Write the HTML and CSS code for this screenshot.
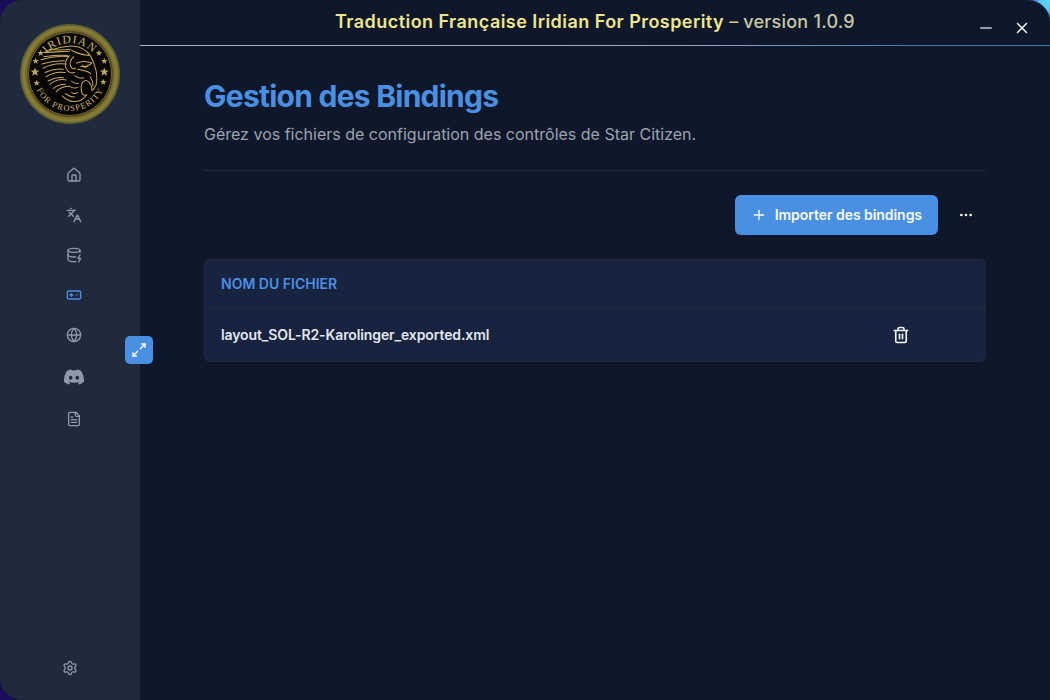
FILE: index.html
```html
<!DOCTYPE html>
<html lang="fr">
<head>
<meta charset="utf-8">
<title>Traduction Française Iridian For Prosperity</title>
<link rel="stylesheet" href="styles.css">
</head>
<body>
<div class="app">
  <aside class="sidebar">
    <div class="logo">
      <svg class="logo-svg" viewBox="0 0 100 100" width="100" height="100" aria-hidden="true">
        <defs>
          <radialGradient id="rim" cx="50%" cy="50%" r="50%">
            <stop offset="83%" stop-color="#2e2a10"/>
            <stop offset="87%" stop-color="#77692a"/>
            <stop offset="93%" stop-color="#8a8238"/>
            <stop offset="100%" stop-color="#555532"/>
          </radialGradient>
          <path id="arcTop" d="M19 50a31 31 0 0 1 62 0"/>
          <path id="arcBot" d="M13 50a37 37 0 0 0 74 0"/>
          <path id="star" d="M0-3.200.9-1 3.200-1 1.400.4 2 2.700 0 1.400-2 2.700-1.400.4-3.200-1-.9-1z"/>
        </defs>
        <circle cx="50" cy="50" r="50" fill="url(#rim)"/>
        <circle cx="50" cy="50" r="41.500" fill="#070603" stroke="#8a7a3c" stroke-width=".8"/>
        <text class="logo-text-top"><textPath href="#arcTop" startOffset="50%" text-anchor="middle">IRIDIAN</textPath></text>
        <text class="logo-text-bot"><textPath href="#arcBot" startOffset="50%" text-anchor="middle">FOR PROSPERITY</textPath></text>
        <g fill="#b8a45e">
          <use href="#star" x="20.700" y="29"/>
          <use href="#star" x="15.700" y="37"/>
          <use href="#star" transform="translate(15 48) scale(1.400)"/>
          <use href="#star" x="16.700" y="59"/>
          <use href="#star" x="79" y="29"/>
          <use href="#star" x="84.300" y="37"/>
          <use href="#star" transform="translate(84.300 48) scale(1.400)"/>
          <use href="#star" x="83.300" y="58"/>
        </g>
        <g fill="none" stroke="#c8a958" stroke-width=".95" stroke-linecap="round" stroke-linejoin="round" transform="matrix(1.020 0 0 1.060 -1.500 -6.600)">
          <path d="M25 33c9-3 18-6 27-6 9 0 15 4 19 10 3 5 4 9 5 13 1 5 1 10 0 14-1 2-2 4-4 5 0-3-1-6-3-8-2-2-4-2-6 0-2 3-2 6-1 10 1 2 3 3 5 2-3 4-6 6-10 6-5 1-10-1-14-5"/>
          <path d="M25 33c8 0 16-1 25-1M30 30c7 1 14 1 21 0M22 40c9-3 18-4 27-3M25 37c8-1 15-2 23-1M24 48c7-4 15-5 23-4M23 44c8-2 15-3 22-3M27 56c6-4 12-5 19-4M26 52c6-3 12-4 18-3M31 63c5-4 10-5 16-4M29 60c5-3 10-4 15-3M37 70c4-4 8-5 13-5M34 67c4-3 8-4 12-4"/>
          <path d="M52 31c5 3 10 4 17 5M50 36c-4 4-5 9-3 13 2 3 5 4 8 3M54 37c-3 3-4 6-3 9 1 2 3 3 5 2"/>
          <path d="M57 43c5-2 10-2 15 0-3 3-7 4-11 3M63 45a2.500 2 0 0 0 5 0"/>
          <path d="M58 49c4 1 9 1 13 4M55 55c3 2 6 3 9 2M52 60c2 2 4 3 7 2M50 65c3 2 5 2 8 1M52 71c2 1 4 1 6 0M46 72c3 2 6 3 9 3"/>
          <path d="M70 56c2 2 3 5 3 9"/>
        </g>
      </svg>
    </div>
    <nav class="nav">
      <a class="nav-item"><svg class="ic" viewBox="0 0 24 24"><path d="M15 21v-8a1 1 0 0 0-1-1h-4a1 1 0 0 0-1 1v8"/><path d="M3 10a2 2 0 0 1 .709-1.528l7-5.999a2 2 0 0 1 2.582 0l7 5.999A2 2 0 0 1 21 10v9a2 2 0 0 1-2 2H5a2 2 0 0 1-2-2z"/></svg></a>
      <a class="nav-item"><svg class="ic" viewBox="0 0 24 24"><path d="m5 8 6 6"/><path d="m4 14 6-6 2-3"/><path d="M2 5h12"/><path d="M7 2h1"/><path d="m22 22-5-10-5 10"/><path d="M14 18h6"/></svg></a>
      <a class="nav-item"><svg class="ic" viewBox="0 0 24 24"><ellipse cx="12" cy="5" rx="9" ry="3"/><path d="M3 5V19A9 3 0 0 0 15 21.840"/><path d="M21 5V8"/><path d="M21 12L18 17H22L19 22"/><path d="M3 12A9 3 0 0 0 14.590 14.870"/></svg></a>
      <a class="nav-item nav-active"><svg class="ic" viewBox="0 0 24 24"><rect x="2" y="6" width="20" height="12" rx="2"/><path d="M6 12h4"/><path d="M8 10v4"/><path d="M15 13h.01"/><path d="M18 11h.01"/></svg></a>
      <a class="nav-item"><svg class="ic" viewBox="0 0 24 24"><circle cx="12" cy="12" r="10"/><path d="M12 2a14.500 14.500 0 0 0 0 20 14.500 14.500 0 0 0 0-20"/><path d="M2 12h20"/></svg></a>
      <a class="nav-item nav-discord"><svg class="ic-discord" viewBox="0 0 24 24"><path d="M20.317 4.370a19.791 19.791 0 0 0-4.885-1.515.074.074 0 0 0-.079.037c-.21.375-.444.864-.608 1.250a18.270 18.270 0 0 0-5.487 0 12.640 12.640 0 0 0-.617-1.250.077.077 0 0 0-.079-.037A19.736 19.736 0 0 0 3.677 4.370a.070.070 0 0 0-.032.027C.533 9.046-.32 13.580.099 18.057a.082.082 0 0 0 .031.057 19.900 19.900 0 0 0 5.993 3.030.078.078 0 0 0 .084-.028c.462-.630.874-1.295 1.226-1.994a.076.076 0 0 0-.041-.106 13.107 13.107 0 0 1-1.872-.892.077.077 0 0 1-.008-.128 10.200 10.200 0 0 0 .372-.292.074.074 0 0 1 .077-.010c3.928 1.793 8.180 1.793 12.062 0a.074.074 0 0 1 .078.010c.120.098.246.198.373.292a.077.077 0 0 1-.006.127 12.299 12.299 0 0 1-1.873.892.077.077 0 0 0-.041.107c.360.698.772 1.362 1.225 1.993a.076.076 0 0 0 .084.028 19.839 19.839 0 0 0 6.002-3.030.077.077 0 0 0 .032-.054c.500-5.177-.838-9.674-3.549-13.660a.061.061 0 0 0-.031-.030zM8.020 15.330c-1.183 0-2.157-1.085-2.157-2.419 0-1.333.956-2.419 2.157-2.419 1.210 0 2.176 1.096 2.157 2.420 0 1.333-.956 2.418-2.157 2.418zm7.975 0c-1.183 0-2.157-1.085-2.157-2.419 0-1.333.955-2.419 2.157-2.419 1.210 0 2.176 1.096 2.157 2.420 0 1.333-.946 2.418-2.157 2.418z"/></svg></a>
      <a class="nav-item"><svg class="ic" viewBox="0 0 24 24"><path d="M15 2H6a2 2 0 0 0-2 2v16a2 2 0 0 0 2 2h12a2 2 0 0 0 2-2V7Z"/><path d="M14 2v4a2 2 0 0 0 2 2h4"/><path d="M10 9H8"/><path d="M16 13H8"/><path d="M16 17H8"/></svg></a>
    </nav>
    <a class="settings"><svg class="ic" viewBox="0 0 24 24"><path d="M9.671 4.136a2.340 2.340 0 0 1 4.659 0 2.340 2.340 0 0 0 3.319 1.915 2.340 2.340 0 0 1 2.330 4.033 2.340 2.340 0 0 0 0 3.831 2.340 2.340 0 0 1-2.330 4.033 2.340 2.340 0 0 0-3.319 1.915 2.340 2.340 0 0 1-4.659 0 2.340 2.340 0 0 0-3.320-1.915 2.340 2.340 0 0 1-2.330-4.033 2.340 2.340 0 0 0 0-3.831A2.340 2.340 0 0 1 6.350 6.051a2.340 2.340 0 0 0 3.320-1.915"/><circle cx="12" cy="12" r="3"/></svg></a>
    <button class="expand"><svg class="ic-expand" viewBox="0 0 24 24"><path d="m21 3-7 7"/><path d="m3 21 7-7"/><path d="M16 3h5v5"/><path d="M3 16v5h5"/></svg></button>
  </aside>
  <div class="main">
    <header class="titlebar">
      <div class="title"><span class="title-name">Traduction Française Iridian For Prosperity</span><span class="title-dash"> – </span><span class="title-version">version 1.0.9</span></div>
      <div class="win-controls">
        <svg class="win-ic win-min" viewBox="0 0 24 24"><path d="M5 12h14"/></svg>
        <svg class="win-ic" viewBox="0 0 24 24"><path d="M18 6 6 18"/><path d="m6 6 12 12"/></svg>
      </div>
    </header>
    <main class="content">
      <h1 class="heading">Gestion des Bindings</h1>
      <p class="sub">Gérez vos fichiers de configuration des contrôles de Star Citizen.</p>
      <div class="sep"></div>
      <div class="actions">
        <button class="btn-primary"><svg class="ic-plus" viewBox="0 0 24 24"><path d="M5 12h14"/><path d="M12 5v14"/></svg>Importer des bindings</button>
        <button class="btn-more"><svg class="ic-more" viewBox="0 0 24 24"><circle cx="5" cy="12" r="2"/><circle cx="12" cy="12" r="2"/><circle cx="19" cy="12" r="2"/></svg></button>
      </div>
      <section class="table">
        <div class="thead">NOM DU FICHIER</div>
        <div class="row">
          <span class="fname">layout_SOL-R2-Karolinger_exported.xml</span>
          <span class="row-action"><svg class="ic-trash" viewBox="0 0 24 24"><path d="M3 6h18"/><path d="M19 6v14a2 2 0 0 1-2 2H7a2 2 0 0 1-2-2V6"/><path d="M8 6V4a2 2 0 0 1 2-2h4a2 2 0 0 1 2 2v2"/><path d="M10 11v6"/><path d="M14 11v6"/></svg></span>
        </div>
      </section>
    </main>
  </div>
</div>
</body>
</html>
```

FILE: styles.css
```css
* { box-sizing: border-box; }
html, body { margin: 0; height: 100%; }
body {
  width: 1050px;
  height: 700px;
  overflow: hidden;
  background:
    radial-gradient(circle at 100% 100%, #0f182b 0, #0f182b 40px, transparent 41px),
    radial-gradient(circle at 100% 0, #55dcf7 0, #55c8f7 10px, #4a58d8 18px, transparent 30px),
    #180e5c;
  font-family: Inter, "Liberation Sans", sans-serif;
}
.app {
  display: flex;
  width: 1050px;
  height: 700px;
  border-radius: 22px;
  overflow: hidden;
  background: #0f182b;
}
.sidebar {
  position: relative;
  flex: 0 0 140px;
  display: flex;
  flex-direction: column;
  align-items: center;
  background: #1f2b3d;
  padding-top: 24px;
}
.logo { width: 100px; height: 100px; }
.logo-svg { display: block; }
.logo-text-top { font-family: "Liberation Serif", serif; font-size: 11.500px; letter-spacing: 1.200px; fill: #cdb871; }
.logo-text-bot { font-family: "Liberation Serif", serif; font-size: 8.500px; letter-spacing: 1px; fill: #cdb871; }
.nav {
  display: flex;
  flex-direction: column;
  align-items: center;
  gap: 16px;
  margin-top: 39px;
  padding-left: 7px;
  width: 100%;
  flex: 1;
}
.nav-item { display: flex; align-items: center; justify-content: center; width: 24px; height: 24px; }
.ic {
  width: 16px; height: 16px;
  fill: none; stroke: #8f99a8; stroke-width: 2; stroke-linecap: round; stroke-linejoin: round;
}
.nav-active .ic { stroke: #4a90e2; }
.nav-discord { height: 28px; }
.ic-discord { width: 20px; height: 20px; fill: #8f99a8; }
.settings { display: flex; margin-bottom: 24px; }
.expand {
  position: absolute;
  left: 125px; top: 336px;
  width: 28px; height: 28px;
  display: flex; align-items: center; justify-content: center;
  padding: 0; border: 0; border-radius: 5px;
  background: #4a90e2;
}
.ic-expand { width: 16px; height: 16px; fill: none; stroke: #fff; stroke-width: 2; stroke-linecap: round; stroke-linejoin: round; }
.main { flex: 1; display: flex; flex-direction: column; min-width: 0; }
.titlebar {
  position: relative;
  height: 46px;
  flex: none;
  display: flex;
  align-items: center;
  justify-content: center;
  border-bottom: 1px solid;
  border-image: linear-gradient(90deg, #a3b8d0 0%, #98a9bf 60%, #4079b8 85%, #4079b8 100%) 1;
  padding-bottom: 3px;
}
.title { font-size: 18px; font-weight: 600; color: #f0e68c; }
.title-name { letter-spacing: .45px; }
.title-dash { font-weight: 400; color: #d6cf86; }
.title-version { font-weight: 500; letter-spacing: .25px; color: #c9c9a6; }
.win-controls { position: absolute; right: 19px; top: 19px; display: flex; gap: 18px; align-items: center; }
.win-ic { width: 18px; height: 18px; fill: none; stroke: #f1f5f9; stroke-width: 2; stroke-linecap: round; stroke-linejoin: round; }
.win-min { stroke: #c4c9d1; }
.content { flex: 1; padding: 32px 64px 0; }
.heading { margin: 0; font-size: 30px; line-height: 36px; font-weight: 700; letter-spacing: -.75px; color: #4a90e2; }
.sub { margin: 8px 0 0; font-size: 16px; line-height: 24px; color: #9ca3af; }
.sep { height: 1px; margin-top: 24px; background: #1f2b3d; }
.actions { display: flex; justify-content: flex-end; align-items: center; gap: 8px; margin-top: 24px; }
.btn-primary {
  display: flex; align-items: center; gap: 8px;
  height: 40px; padding: 0 16px;
  border: 0; border-radius: 6px;
  background: #4a90e2; color: #f8fafc;
  font: 600 14px/20px Inter, "Liberation Sans", sans-serif;
  letter-spacing: -.05px;
}
.ic-plus { width: 16px; height: 16px; fill: none; stroke: #f8fafc; stroke-width: 2; stroke-linecap: round; }
.btn-more { display: flex; align-items: center; justify-content: center; width: 40px; height: 40px; padding: 0; border: 0; background: transparent; }
.ic-more { width: 16px; height: 16px; fill: #f8fafc; }
.table {
  margin-top: 24px;
  border: 1px solid #1f2b3d;
  border-radius: 6px;
  background: #17233f;
}
.thead {
  height: 49px;
  display: flex; align-items: center;
  padding: 0 16px 2px;
  border-bottom: 1px solid #1f2b3d;
  font-size: 14px; font-weight: 600; color: #4a90e2;
}
.row { display: flex; align-items: center; height: 52px; padding: 0 16px; }
.fname { flex: 1; padding-bottom: 2px; font-size: 14px; font-weight: 600; letter-spacing: -.11px; color: #e2e8f0; }
.row-action { display: flex; margin-right: 59px; }
.ic-trash { width: 18px; height: 18px; fill: none; stroke: #f1f5f9; stroke-width: 2.200; stroke-linecap: round; stroke-linejoin: round; }
```
